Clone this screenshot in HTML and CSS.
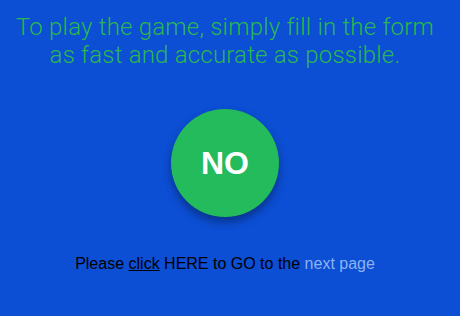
FILE: index.html
```html
<!DOCTYPE html>
<html lang="en">
<head>
    <meta charset="UTF-8">
    <meta name="viewport" content="width=device-width, initial-scale=1.0">
    <title>Fill the form</title>
    <link rel="stylesheet" href="styles.css">
</head>
<body>
    <div class="intro">To play the game, simply fill in the form<br>as fast and accurate as possible.</div>

    <div class="answer-wrap">
        <button class="answer">NO</button>
    </div>

    <div class="footer">Please <a href="#" class="click">click</a> HERE to GO to the <span class="next">next page</span></div>
</body>
</html>
```

FILE: styles.css
```css
body {
    margin: 0;
    padding-right: 10px;
    height: 100vh;
    background: #0c4ed4;
    font-family: "Liberation Sans", Arial, sans-serif;
    text-align: center;
    overflow: hidden;
}
.intro {
    color: #2bb84f;
    font-family: Roboto, "Liberation Sans", sans-serif;
    font-weight: 300;
    font-size: 24px;
    line-height: 28px;
    letter-spacing: 0.2px;
    padding-top: 13px;
    white-space: nowrap;
}
.answer-wrap {
    display: flex;
    justify-content: center;
    margin-top: 40px;
}
.answer {
    width: 108px;
    height: 108px;
    border-radius: 50%;
    border: none;
    background: #23bb5b;
    color: white;
    font-family: "Liberation Sans", Arial, sans-serif;
    font-weight: bold;
    font-size: 32px;
    box-shadow: 0 5px 8px rgba(0, 0, 0, 0.35);
    cursor: pointer;
}
.footer {
    margin-top: 38px;
    font-size: 16px;
    color: #000;
}
.click {
    color: #000;
}
.next {
    color: #8db3f0;
}
```
